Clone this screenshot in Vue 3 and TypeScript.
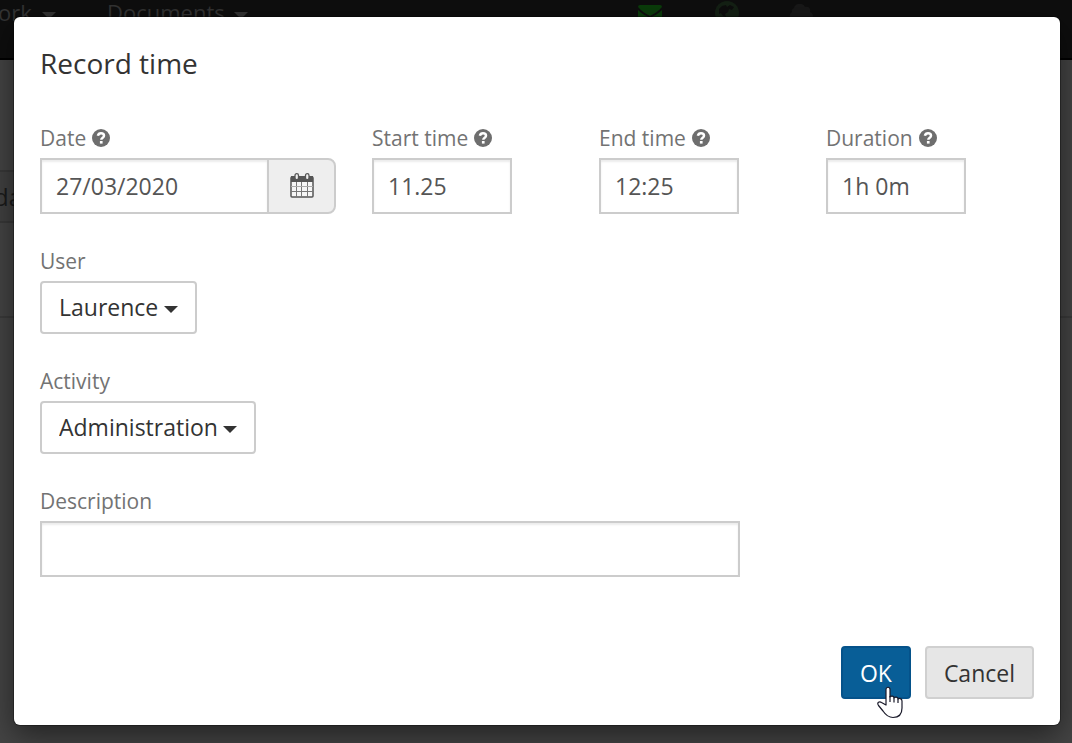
<script setup lang="ts">
import { ref } from 'vue'

interface TimeField {
  id: string
  label: string
  value: string
  picker: boolean
}

const timeFields = ref<TimeField[]>([
  { id: 'date', label: 'Date', value: '27/03/2020', picker: true },
  { id: 'start', label: 'Start time', value: '11.25', picker: false },
  { id: 'end', label: 'End time', value: '12:25', picker: false },
  { id: 'duration', label: 'Duration', value: '1h 0m', picker: false },
])

const user = ref('Laurence')
const activity = ref('Administration')
const description = ref('')
</script>

<template>
  <div class="screen">
    <div class="page" aria-hidden="true">
      <header class="topbar">
        <span class="nav-item work">ork <i class="caret"></i></span>
        <span class="nav-item documents">Documents <i class="caret"></i></span>
        <svg class="nav-icon mail" viewBox="0 0 24 20">
          <path fill="#0a3d0a" d="M2 0h20a2 2 0 0 1 2 2c-3 4-8 7-12 9C8 9 3 6 0 2a2 2 0 0 1 2-2zM0 5c3 3 8 6 12 8 4-2 9-5 12-8v13H0z" />
        </svg>
        <svg class="nav-icon globe" viewBox="0 0 24 24">
          <circle cx="12" cy="12" r="12" fill="#142014" />
          <path fill="#0d0d0d" d="M4 8l3-3 4-1 1 2 3-2 4 2-2 3-3-1-1 3-3 2 1 3-3-1-2-3-2 1z" />
        </svg>
        <svg class="nav-icon cloud" viewBox="0 0 24 20">
          <path fill="#181818" d="M4 17a5 5 0 0 1-1-9c-1-3 2-4 2-4 1-5 9-6 11-1 4-1 6 2 5 5 5 2 3 9-1 9z" />
        </svg>
      </header>
      <div class="toolbar"><span class="tab">da</span></div>
      <div class="rule"></div>
    </div>

    <form class="modal" role="dialog" aria-labelledby="dialog-title" @submit.prevent>
      <h1 id="dialog-title">Record time</h1>

      <div class="times">
        <div v-for="field in timeFields" :key="field.id" class="field">
          <div class="label-row">
            <label :for="field.id">{{ field.label }}</label>
            <svg class="help" viewBox="0 0 18 18" aria-hidden="true">
              <circle cx="9" cy="9" r="9" fill="#6e6e6e" />
              <path fill="none" stroke="#fff" stroke-width="2.5" d="M5.9 6.8C6.3 5 7.5 4.3 9 4.3c1.8 0 3 1 3 2.4 0 2-2.7 1.9-2.7 4.1" />
              <path fill="#fff" d="M7.9 12h2.7v2.6H7.9z" />
            </svg>
          </div>
          <div v-if="field.picker" class="date-group">
            <input :id="field.id" v-model="field.value" type="text" class="text" />
            <button type="button" class="picker" aria-label="Choose date">
              <svg viewBox="0 0 24 26" aria-hidden="true">
                <rect x="1" y="4" width="22" height="20" rx="1" fill="#f6f6f6" stroke="#555" stroke-width="1.5" />
                <path fill="#555" d="M1 3h22v6H1z" />
                <path stroke="#777" stroke-width="1" fill="none" d="M6.500 9v15M11.500 9v15M17.500 9v15M1 18.500h22" />
                <path stroke="#aaa" stroke-width="1" fill="none" d="M1 13.500h22" />
                <rect x="5" y="0.700" width="3.500" height="6" rx="1.700" fill="#eee" stroke="#555" stroke-width="1.300" />
                <rect x="15.500" y="0.700" width="3.500" height="6" rx="1.700" fill="#eee" stroke="#555" stroke-width="1.300" />
              </svg>
            </button>
          </div>
          <input v-else :id="field.id" v-model="field.value" type="text" class="text short" />
        </div>
      </div>

      <div class="field">
        <div class="label-row"><label for="user">User</label></div>
        <div class="dropdown">
          <select id="user" v-model="user">
            <option>Laurence</option>
          </select>
          <i class="caret"></i>
        </div>
      </div>

      <div class="field">
        <div class="label-row"><label for="activity">Activity</label></div>
        <div class="dropdown">
          <select id="activity" v-model="activity">
            <option>Administration</option>
          </select>
          <i class="caret"></i>
        </div>
      </div>

      <div class="field">
        <div class="label-row"><label for="description">Description</label></div>
        <input id="description" v-model="description" type="text" class="text long" />
      </div>

      <footer class="actions">
        <button type="submit" class="btn primary">
          OK
          <svg class="pointer" viewBox="0 0 26 33" aria-hidden="true">
            <path
              fill="#fff"
              stroke="#1a1a2a"
              stroke-width="1.2"
              stroke-linejoin="round"
              d="M9 19V3.500c0-3 4-3 4 0V11c1-1.500 4-1 4 1 1-1.500 4-1 4 1 1-1 4-.5 4 2v7c0 6-3 9.500-9 9.500-5 0-8-3.500-10-6.500l-4.500-5.500c-2-3 1-4.500 3-3z"
            />
            <path fill="none" stroke="#1a1a2a" stroke-width="1.200" d="M13 10v6M17 12v4.500M21 13v4" />
          </svg>
        </button>
        <button type="button" class="btn">Cancel</button>
      </footer>
    </form>
  </div>
</template>

<style>
body {
  margin: 0;
  background: #444;
}
</style>

<style scoped>
.screen {
  position: relative;
  box-sizing: border-box;
  min-height: 100vh;
  padding: 17px 12px 18px 14px;
  overflow: hidden;
  font-family: 'Open Sans', 'Noto Sans', sans-serif;
  color: #333;
}

.page {
  position: absolute;
  inset: 0;
  background: #444;
  color: #1a1a1a;
}

.topbar {
  position: relative;
  height: 58px;
  background: #0e0e0e;
  border-bottom: 2px solid #000;
  color: #333;
  font-size: 22px;
  line-height: 24px;
}

.nav-item,
.nav-icon {
  position: absolute;
  top: 0;
  white-space: nowrap;
}

.work {
  left: -2px;
}

.documents {
  left: 107px;
}

.nav-icon {
  width: 24px;
}

.mail {
  left: 638px;
  top: 5px;
}

.globe {
  left: 715px;
  top: 1px;
}

.cloud {
  left: 789px;
  top: 4px;
}

.toolbar {
  margin-top: 110px;
}

.tab {
  display: block;
  width: 60px;
  border: solid #383838;
  border-width: 2px 0;
  background: #404040;
  font-size: 24px;
  line-height: 49px;
  text-indent: -6px;
}

.rule {
  margin-top: 93px;
  border-top: 2px solid #3a3a3a;
}

.caret {
  display: inline-block;
  margin-left: 4px;
  border: 7px solid transparent;
  border-top-color: currentColor;
  border-bottom: 0;
  vertical-align: 2px;
}

.modal {
  position: relative;
  box-sizing: border-box;
  padding: 26px;
  border-radius: 6px;
  background: #fff;
  box-shadow: 0 0 0 1px rgba(0, 0, 0, 0.3), 0 10px 30px rgba(0, 0, 0, 0.5);
}

h1 {
  margin: 0 0 41px;
  font-size: 28px;
  font-weight: 400;
  line-height: 40px;
}

.times {
  display: grid;
  grid-template-columns: 332fr 227fr 227fr 208fr;
}

.field {
  margin-bottom: 33px;
}

.label-row {
  display: flex;
  align-items: center;
  gap: 6px;
  height: 28px;
  margin-bottom: 6px;
  color: #737373;
  font-size: 21px;
  line-height: 28px;
}

.help {
  width: 18px;
  height: 18px;
}

.text {
  display: block;
  box-sizing: border-box;
  width: 100%;
  height: 56px;
  padding: 0 14px;
  border: 2px solid #ccc;
  border-radius: 0;
  outline: 0;
  background: #fff;
  box-shadow: inset 0 2px 2px rgba(0, 0, 0, 0.08);
  color: #555;
  font: 23px 'Open Sans', 'Noto Sans', sans-serif;
}

.short {
  max-width: 140px;
}

.long {
  max-width: 700px;
}

.date-group {
  display: flex;
  max-width: 296px;
}

.date-group .text {
  flex: 1;
  min-width: 0;
  border-right: 0;
}

.picker {
  display: flex;
  box-sizing: border-box;
  flex: none;
  align-items: center;
  justify-content: center;
  width: 69px;
  padding: 0;
  border: 2px solid #ccc;
  border-radius: 0 8px 8px 0;
  background: #eee;
}

.picker svg {
  width: 24px;
  height: 26px;
}

.dropdown {
  position: relative;
  width: fit-content;
}

select {
  display: block;
  box-sizing: border-box;
  height: 53px;
  padding: 0 36px 2px 17px;
  border: 2px solid #ccc;
  border-radius: 4px;
  appearance: none;
  outline: 0;
  background: #fff;
  color: #333;
  font: 23px 'Open Sans', 'Noto Sans', sans-serif;
}

.dropdown .caret {
  position: absolute;
  top: 25px;
  right: 19px;
  pointer-events: none;
}

.actions {
  display: flex;
  justify-content: flex-end;
  gap: 14px;
  margin-top: 69px;
}

.btn {
  position: relative;
  box-sizing: border-box;
  height: 53px;
  padding: 0 17px;
  border: 2px solid #d0d0d0;
  border-radius: 4px;
  background: #e6e6e6;
  color: #333;
  font: 23px 'Open Sans', 'Noto Sans', sans-serif;
}

.primary {
  border-color: #05528a;
  background: #085e97;
  color: #fff;
}

.pointer {
  position: absolute;
  top: 38px;
  left: 34px;
  width: 26px;
  height: 33px;
}
</style>
